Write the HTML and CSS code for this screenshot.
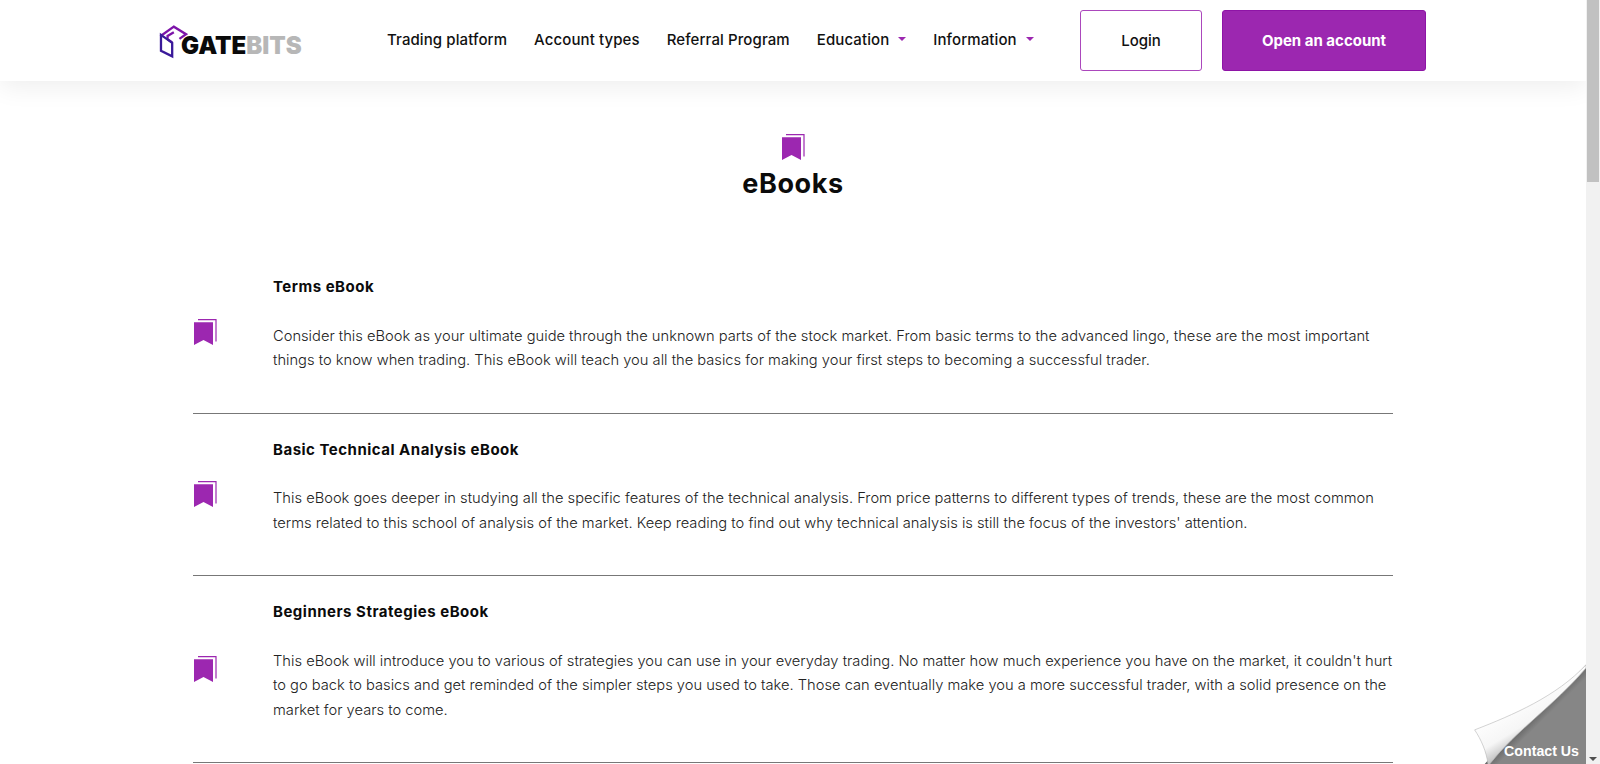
FILE: index.html
```html
<!DOCTYPE html>
<html lang="en">

<head>
    <meta charset="UTF-8">
    <title>eBooks - GateBits</title>
    <link rel="stylesheet" href="styles.css">
</head>

<body>
    <div class="page">
        <header class="topbar">
            <a class="logo" href="#">
                <svg class="logo-mark" viewBox="58 68 88 104" width="29" height="35">
                    <path d="M62 104 L103 75 L140 98 L120 112 M103 92 L84 103 L84 113 L98 123" fill="none" stroke="#7d14a9" stroke-width="7"/>
                    <path d="M64 100 L64 148 L98 165 L98 124 Z" fill="none" stroke="#3a1a9a" stroke-width="7"/>
                </svg>
                <span class="logo-text">GATE<span class="logo-grey">BITS</span></span>
            </a>
            <nav class="menu">
                <a class="menu-item" href="#">Trading platform</a>
                <a class="menu-item" href="#">Account types</a>
                <a class="menu-item" href="#">Referral Program</a>
                <a class="menu-item has-sub" href="#">Education</a>
                <a class="menu-item has-sub" href="#">Information</a>
            </nav>
            <a class="btn btn-login" href="#">Login</a>
            <a class="btn btn-open" href="#">Open an account</a>
        </header>

        <main class="content">
            <div class="title-block">
                <svg class="book" viewBox="0 0 23 26" width="23" height="26">
                    <path d="M0 3.3h19v22.7l-9.500-5-9.500 5z" fill="#9c27b0"/>
                    <path d="M4 .6h18v22" fill="none" stroke="#9c27b0" stroke-width="1.200"/>
                </svg>
                <h1>eBooks</h1>
            </div>

            <section class="books">
                <article class="book-row">
                    <svg class="book" viewBox="0 0 23 26" width="23" height="26">
                        <path d="M0 3.3h19v22.7l-9.500-5-9.500 5z" fill="#9c27b0"/>
                        <path d="M4 .6h18v22" fill="none" stroke="#9c27b0" stroke-width="1.200"/>
                    </svg>
                    <div>
                        <h2>Terms eBook</h2>
                        <p>Consider this eBook as your ultimate guide through the unknown parts of the stock market. From basic terms to the advanced lingo, these are the most important<br>things to know when trading. This eBook will teach you all the basics for making your first steps to becoming a successful trader.</p>
                    </div>
                </article>
                <article class="book-row">
                    <svg class="book" viewBox="0 0 23 26" width="23" height="26">
                        <path d="M0 3.3h19v22.7l-9.500-5-9.500 5z" fill="#9c27b0"/>
                        <path d="M4 .6h18v22" fill="none" stroke="#9c27b0" stroke-width="1.200"/>
                    </svg>
                    <div>
                        <h2>Basic Technical Analysis eBook</h2>
                        <p>This eBook goes deeper in studying all the specific features of the technical analysis. From price patterns to different types of trends, these are the most common<br>terms related to this school of analysis of the market. Keep reading to find out why technical analysis is still the focus of the investors' attention.</p>
                    </div>
                </article>
                <article class="book-row">
                    <svg class="book" viewBox="0 0 23 26" width="23" height="26">
                        <path d="M0 3.3h19v22.7l-9.500-5-9.500 5z" fill="#9c27b0"/>
                        <path d="M4 .6h18v22" fill="none" stroke="#9c27b0" stroke-width="1.200"/>
                    </svg>
                    <div>
                        <h2>Beginners Strategies eBook</h2>
                        <p>This eBook will introduce you to various of strategies you can use in your everyday trading. No matter how much experience you have on the market, it couldn't hurt<br>to go back to basics and get reminded of the simpler steps you used to take. Those can eventually make you a more successful trader, with a solid presence on the<br>market for years to come.</p>
                    </div>
                </article>
            </section>
        </main>

        <!-- page curl in the corner -->
        <a class="contact" href="#">
            <svg viewBox="100 70 338 302" width="113" height="101">
                <defs>
                    <linearGradient id="flap" x1="0.35" y1="0.35" x2="0.62" y2="0.75">
                        <stop offset="0" stop-color="#ffffff"/>
                        <stop offset="0.55" stop-color="#f6f6f6"/>
                        <stop offset="1" stop-color="#a8a8a8"/>
                    </linearGradient>
                    <linearGradient id="under" x1="0.25" y1="0.35" x2="0.62" y2="0.72">
                        <stop offset="0.3" stop-color="#3c3c3c"/>
                        <stop offset="0.72" stop-color="#868686"/>
                    </linearGradient>
                </defs>
                <path d="M438 75V372H135C220 270 330 200 438 75z" fill="url(#under)"/>
                <path d="M438 75C350 170 220 225 105 270C125 300 140 335 145 372H150C230 270 340 200 438 85z" fill="url(#flap)" stroke="#bdbdbd" stroke-width="2"/>
            </svg>
            <span>Contact Us</span>
        </a>
    </div>

    <div class="scrollbar">
        <div class="scroll-thumb"></div>
        <div class="scroll-arrow"></div>
    </div>
</body>

</html>
```

FILE: styles.css
```css
* {
    box-sizing: border-box;
}

html,
body {
    height: 100%;
}

body {
    margin: 0;
    display: flex;
    overflow: hidden;
    background-color: white;
    color: #111;
    font-family: Inter, "Liberation Sans", sans-serif;
}

a {
    text-decoration: none;
    color: inherit;
}

.page {
    position: relative;
    flex: 1;
    height: 100%;
    overflow: hidden;
}

/* header */
.topbar {
    display: flex;
    align-items: center;
    height: 81px;
    padding-left: 159px;
    background-color: white;
    box-shadow: 0 6px 24px rgba(0, 0, 0, .07);
}

.logo {
    display: flex;
    align-items: flex-end;
    width: 228px;
    padding-top: 1px;
}

.logo-mark {
    margin-right: -7px;
}

.logo-text {
    font-size: 24px;
    line-height: 24px;
    font-weight: 900;
    color: #0a0a0a;
    margin-bottom: 1px;
}

.logo-grey {
    color: #b7b7b7;
}

.menu {
    display: flex;
    width: 693px;
    gap: 27px;
    font-size: 15px;
    font-weight: 500;
    letter-spacing: .1px;
    margin-top: -3px;
}

.has-sub {
    display: flex;
    align-items: center;
    gap: 9px;
}

.has-sub::after {
    content: "";
    border-left: 4px solid transparent;
    border-right: 4px solid transparent;
    border-top: 4px solid #9c27b0;
}

.btn {
    display: flex;
    align-items: center;
    justify-content: center;
    height: 61px;
    font-size: 15px;
    border-radius: 3px;
}

.btn-login {
    width: 122px;
    margin-right: 20px;
    border: 1px solid #ab47bc;
    font-weight: 500;
}

.btn-open {
    width: 204px;
    border: 1px solid #8e14a6;
    background-color: #9c27b0;
    color: white;
    font-weight: 700;
}

/* content */
.content {
    width: 1200px;
    margin: 0 auto;
}

.title-block {
    display: flex;
    flex-direction: column;
    align-items: center;
    padding-top: 53px;
    height: 170px;
}

.title-block h1 {
    margin: 8px 0 0;
    font-size: 27px;
    line-height: 32px;
    font-weight: 700;
    letter-spacing: .6px;
    color: #0b0b0b;
}

.book-row {
    display: grid;
    grid-template-columns: 80px 1fr;
    align-items: center;
    padding: 27px 0 39.6px;
    border-bottom: 1px solid #777;
}

.book-row .book {
    margin: 12px 0 0 1px;
}

.book-row h2 {
    margin: 0 0 27.6px;
    font-size: 15px;
    line-height: 18px;
    font-weight: 700;
    letter-spacing: .5px;
    color: #0b0b0b;
}

.book-row p {
    margin: 0;
    font-size: 14.7px;
    line-height: 24.7px;
    font-weight: 300;
    color: #222;
    white-space: nowrap;
}

/* corner link */
.contact {
    position: absolute;
    right: 0;
    bottom: 0;
    width: 113px;
    height: 101px;
}

.contact svg {
    display: block;
}

.contact span {
    position: absolute;
    right: 7px;
    bottom: 4px;
    font-family: "Liberation Sans", sans-serif;
    font-size: 14.2px;
    line-height: 18px;
    font-weight: 700;
    color: white;
}

/* scrollbar */
.scrollbar {
    position: relative;
    width: 14px;
    height: 100%;
    padding: 0 1px;
    background-color: #f1f1f1;
}

.scroll-thumb {
    height: 182px;
    background-color: #c1c1c1;
}

.scroll-arrow {
    position: absolute;
    bottom: 3px;
    left: 3px;
    border-left: 4px solid transparent;
    border-right: 4px solid transparent;
    border-top: 4px solid #505050;
}
```
